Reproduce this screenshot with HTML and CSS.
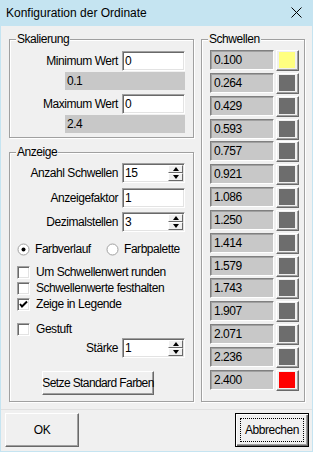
FILE: index.html
```html
<!DOCTYPE html>
<html lang="de">
<head>
  <meta charset="UTF-8">
  <title>Konfiguration der Ordinate</title>
  <link rel="stylesheet" href="styles.css">
</head>
<body>

<div class="dialog">
  <!-- Titelleiste -->
  <div class="titlebar">
    <span class="title">Konfiguration der Ordinate</span>
    <svg class="close" width="11" height="11" viewBox="0 0 11 11">
      <path d="M0.5 0.5 L10.5 10.5 M10.5 0.5 L0.5 10.5" stroke="#000" stroke-width="1" fill="none"/>
    </svg>
  </div>

  <div class="client">
    <div class="columns">
      <div class="left">
        <!-- Skalierung -->
        <div class="group scale">
          <span class="legend">Skalierung</span>
          <div class="row"><label>Minimum Wert</label><div class="edit">0</div></div>
          <div class="readout">0.1</div>
          <div class="row"><label>Maximum Wert</label><div class="edit">0</div></div>
          <div class="readout">2.4</div>
        </div>

        <!-- Anzeige -->
        <div class="group display">
          <span class="legend">Anzeige</span>
          <div class="row r1"><label>Anzahl Schwellen</label><div class="edit"><span>15</span><span class="spin"><i class="up"></i><i class="down"></i></span></div></div>
          <div class="row r2"><label>Anzeigefaktor</label><div class="edit">1</div></div>
          <div class="row r3"><label>Dezimalstellen</label><div class="edit"><span>3</span><span class="spin"><i class="up"></i><i class="down"></i></span></div></div>

          <div class="radios">
            <div class="radio first">
              <svg width="13" height="13" viewBox="0 0 13 13"><circle cx="6.5" cy="6.5" r="5.5" fill="#fff" stroke="#a0a0a0"/><circle cx="6.5" cy="6.5" r="2" fill="#000"/></svg>
              <span>Farbverlauf</span>
            </div>
            <div class="radio">
              <svg width="13" height="13" viewBox="0 0 13 13"><circle cx="6.5" cy="6.5" r="5.5" fill="#fff" stroke="#a0a0a0"/></svg>
              <span>Farbpalette</span>
            </div>
          </div>

          <div class="check c1"><span class="box"></span><span>Um Schwellenwert runden</span></div>
          <div class="check"><span class="box"></span><span>Schwellenwerte festhalten</span></div>
          <div class="check"><span class="box"><svg width="11" height="11" viewBox="0 0 11 11"><path d="M2 5 L4 7.5 L9 2.5" stroke="#000" stroke-width="2" fill="none"/></svg></span><span>Zeige in Legende</span></div>
          <div class="check c4"><span class="box"></span><span>Gestuft</span></div>

          <div class="row r5"><label>Stärke</label><div class="edit"><span>1</span><span class="spin"><i class="up"></i><i class="down"></i></span></div></div>

          <div class="btn std">Setze Standard Farben</div>
        </div>
      </div>

      <!-- Schwellen -->
      <div class="group thresholds" id="thresholds">
        <span class="legend">Schwellen</span>
      </div>
    </div>

    <div class="footer">
      <div class="btn big">OK</div>
      <div class="btn big default"><span class="focus">Abbrechen</span></div>
    </div>
  </div>
</div>

<script>
  const list = document.getElementById("thresholds");
  const values = ["0.100", "0.264", "0.429", "0.593", "0.757", "0.921", "1.086", "1.250",
                  "1.414", "1.579", "1.743", "1.907", "2.071", "2.236", "2.400"];

  values.forEach((v, i) => {
    const row = document.createElement("div");
    row.className = "trow";
    let chip = "gray";
    if (i === 0) chip = "yellow";
    if (i === values.length - 1) chip = "red";
    row.innerHTML = `<div class="val">${v}</div><div class="swatch"><span class="chip ${chip}"></span></div>`;
    list.appendChild(row);
  });
</script>

</body>
</html>
```

FILE: styles.css
```css
* {
  box-sizing: border-box;
}
body {
  margin: 0;
  background-color: #c5e4f1;
  font-family: "Liberation Sans", Arial, sans-serif;
  font-size: 12px;
  letter-spacing: -0.45px;
  color: #000;
  white-space: nowrap;
}
.dialog {
  width: 313px;
  height: 452px;
  display: flex;
  flex-direction: column;
}
.titlebar {
  height: 26px;
  display: flex;
  align-items: center;
  justify-content: space-between;
  padding: 0 11px 0 6px;
  letter-spacing: 0;
}
.close {
  margin-top: -1px;
}
.client {
  flex: 1;
  margin: 0 1px 1px;
  background-color: #f0f0f0;
  display: flex;
  flex-direction: column;
}
.columns {
  display: flex;
  gap: 7px;
  padding: 13px 7px 0 8px;
}
.left {
  width: 185px;
  display: flex;
  flex-direction: column;
  gap: 14px;
}
.group {
  position: relative;
  border: 1px solid #a0a0a0;
  box-shadow: inset 1px 1px #fff, 1px 1px #fff;
}
.legend {
  position: absolute;
  top: -8px;
  left: 6px;
  padding: 0 1px;
  line-height: 14px;
  background-color: #f0f0f0;
}

/* Skalierung */
.scale {
  height: 99px;
  padding: 11px 8px 0 0;
  display: flex;
  flex-direction: column;
  align-items: flex-end;
}
.row {
  display: flex;
  align-items: center;
  justify-content: flex-end;
  height: 20px;
  width: 100%;
}
.row label {
  margin-right: 4px;
}
.edit {
  width: 63px;
  height: 20px;
  display: flex;
  align-items: center;
  padding-left: 2px;
  background-color: #fff;
  border: 1px solid;
  border-color: #a0a0a0 #fff #fff #a0a0a0;
  box-shadow: inset 1px 1px #696969, inset -1px -1px #e3e3e3;
}
.readout {
  width: 120px;
  height: 18px;
  line-height: 18px;
  padding-left: 2px;
  margin: 1px 0 4px;
  background-color: #c8c8c8;
}
.spin {
  margin-left: auto;
  margin-right: 1px;
  width: 15px;
  height: 16px;
  display: flex;
  flex-direction: column;
}
.spin i {
  flex: 1;
  display: flex;
  align-items: center;
  justify-content: center;
  background-color: #f0f0f0;
  border: 1px solid;
  border-color: #fff #696969 #696969 #fff;
}
.spin i::after {
  content: "";
  border-left: 3.5px solid transparent;
  border-right: 3.5px solid transparent;
}
.spin .up::after {
  border-bottom: 4px solid #000;
}
.spin .down::after {
  border-top: 4px solid #000;
}

/* Anzeige */
.display {
  height: 250px;
  padding: 10px 8px 0 7px;
}
.r2 {
  margin-top: 5px;
}
.r3 {
  margin-top: 4px;
}
.radios {
  display: flex;
  margin-top: 9px;
  height: 16px;
  align-items: center;
}
.radio {
  display: flex;
  align-items: center;
  gap: 5px;
}
.radio.first {
  width: 89px;
}
.check {
  display: flex;
  align-items: center;
  gap: 6px;
  height: 16px;
}
.c1 {
  margin-top: 7px;
}
.c4 {
  margin-top: 9px;
}
.box {
  width: 13px;
  height: 13px;
  display: flex;
  align-items: center;
  justify-content: center;
  background-color: #fff;
  border: 1px solid;
  border-color: #a0a0a0 #fff #fff #a0a0a0;
  box-shadow: inset 1px 1px #696969, inset -1px -1px #e3e3e3;
}
.r5 {
  margin-top: 1px;
}
.btn {
  display: flex;
  align-items: center;
  justify-content: center;
  background-color: #f0f0f0;
  border: 1px solid;
  border-color: #fff #696969 #696969 #fff;
  box-shadow: inset -1px -1px #a0a0a0;
}
.std {
  width: 112px;
  height: 24px;
  margin: 13px 0 0 25px;
  letter-spacing: -0.6px;
}

/* Schwellen */
.thresholds {
  width: 104px;
  height: 363px;
  padding: 10px 5px 0 8px;
  display: flex;
  flex-direction: column;
  gap: 2.857px;
}
.trow {
  display: flex;
  gap: 2px;
  height: 20px;
}
.val {
  width: 64px;
  height: 20px;
  line-height: 18px;
  padding-left: 3px;
  background-color: #c8c8c8;
  border: 1px solid;
  border-color: #808080 #fff #fff #808080;
  box-shadow: inset 1px 1px #a0a0a0;
}
.swatch {
  width: 23px;
  height: 21px;
  padding: 1px 0 0 2px;
  background-color: #f0f0f0;
  border: 1px solid;
  border-color: #fff #696969 #696969 #fff;
  box-shadow: inset -1px -1px #a0a0a0;
}
.chip {
  display: block;
  width: 16px;
  height: 16px;
}
.gray {
  background-color: #6d6d6d;
}
.yellow {
  background-color: #ffff80;
}
.red {
  background-color: #ff0000;
}

/* Fußzeile */
.footer {
  margin-top: 7px;
  border-top: 1px solid #e0e0e0;
  padding: 3px 3px 0 4px;
  display: flex;
  justify-content: space-between;
}
.big {
  width: 74px;
  height: 34px;
}
.default {
  border: 1px solid #000;
  box-shadow: inset 1px 1px #fff, inset -1px -1px #696969, inset -2px -2px #a0a0a0;
}
.focus {
  width: 64px;
  height: 24px;
  display: flex;
  align-items: center;
  justify-content: center;
  border: 1px dotted #000;
}
```
